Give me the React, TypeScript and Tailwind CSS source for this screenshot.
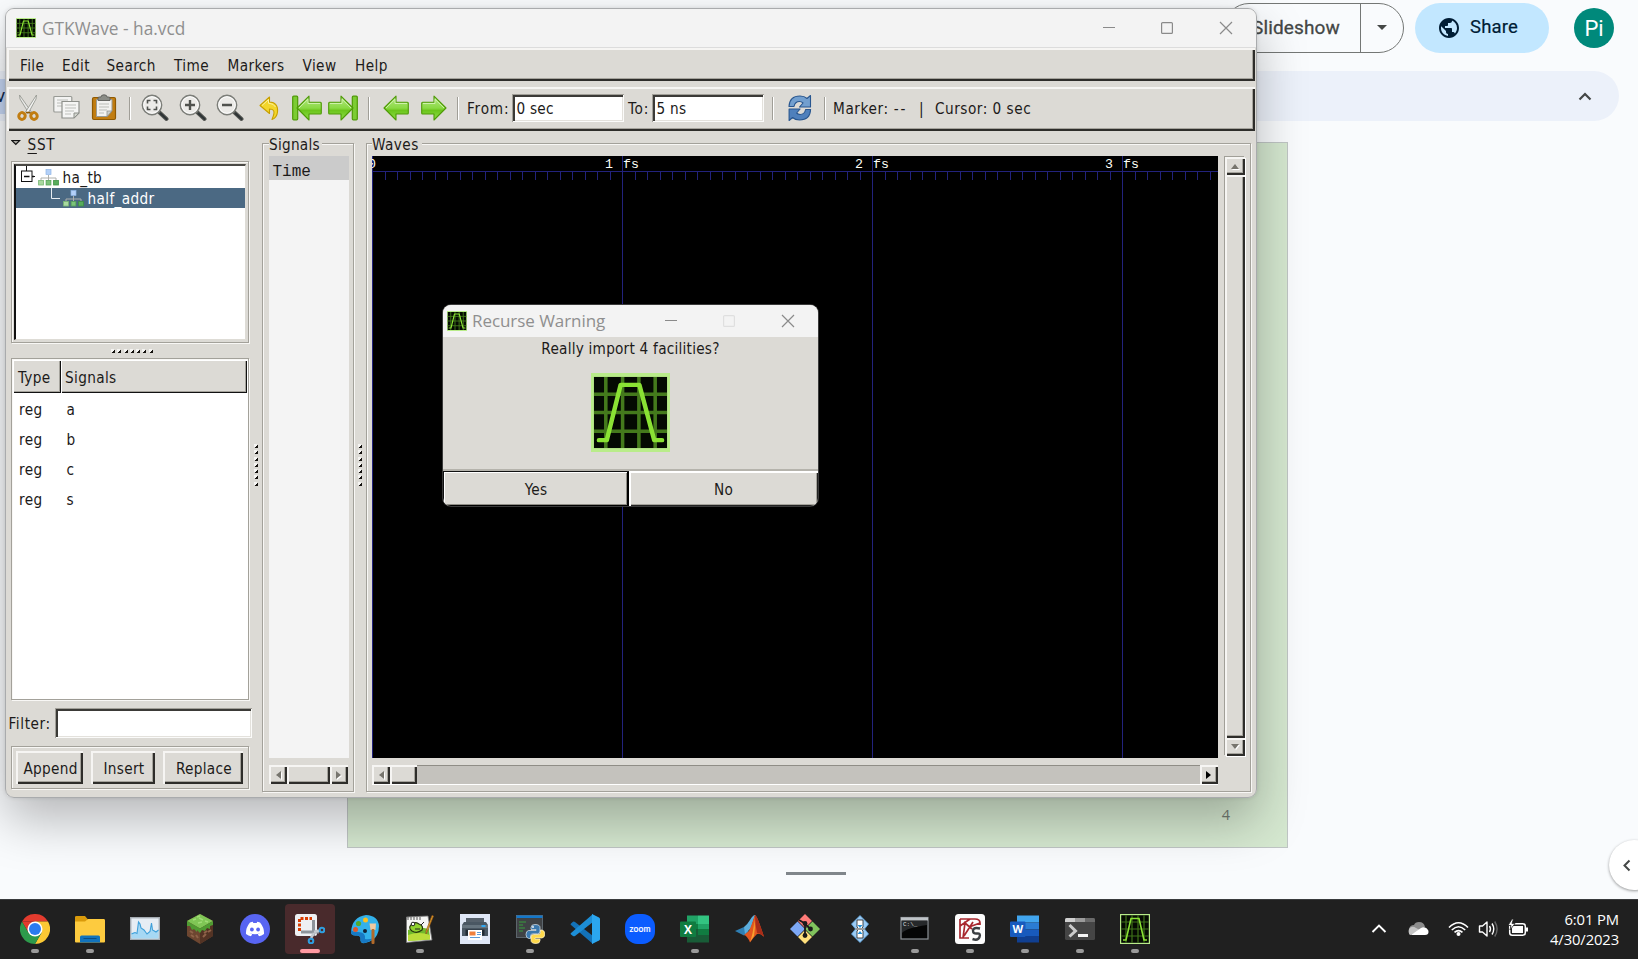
import React from "react";

const RAISED = "bg-[#dcdad5] shadow-[inset_2px_2px_#f6f5f3,inset_-2px_-2px_#2e2d2a,inset_-3px_-3px_#a5a39c]";
const SUNKEN = "bg-white shadow-[inset_1px_1px_#a19f98,inset_-1px_-1px_#fbfbfa,inset_3px_3px_#3b3a37,inset_-2px_-2px_#e3e1dc]";
const ETCHED = "border border-[#a3a19a] shadow-[1px_1px_#f8f7f5,inset_1px_1px_#f8f7f5]";
const GTK = "font-['DejaVu_Sans_Condensed','DejaVu_Sans',sans-serif] text-[15.2px] text-[#1c1a1a]";

function Logo({ size }: { size: number }) {
  return (
    <svg width={size} height={size} viewBox="0 0 80 80" className="block shrink-0">
      <rect width="80" height="80" fill="#b9ec8a" />
      <rect x="3" y="4" width="74" height="72" fill="#040a02" />
      <path d="M15 4V76M32 4V76M48.500 4V76M65 4V76M3 21.500H77M3 40H77M3 59H77" stroke="#447a1c" strokeWidth="3.600" fill="none" />
      <path d="M8 68H16L30 12H49L64 68H72" stroke="#8ae234" strokeWidth="4.500" fill="none" strokeLinecap="round" strokeLinejoin="round" />
    </svg>
  );
}

function Separator({ className = "" }: { className?: string }) {
  return <div className={"h-[23px] w-[2px] shrink-0 border-l border-r border-l-[#a09e97] border-r-white " + className} />;
}

function ZoomIcon({ kind }: { kind: "fit" | "in" | "out" }) {
  return (
    <svg width="28" height="28" viewBox="0 0 28 28" className="block shrink-0">
      <path d="M18 18L25.500 25" stroke="#555753" strokeWidth="4" strokeLinecap="round" />
      <path d="M19.500 19.500L25.500 25" stroke="#2e3436" strokeWidth="2" strokeLinecap="round" />
      <circle cx="11" cy="11" r="9.600" fill="#ecebe8" stroke="#7c7e79" strokeWidth="1.600" />
      <circle cx="11" cy="11" r="8.300" fill="none" stroke="#fff" strokeWidth="1" />
      {kind === "fit" && <path d="M6.500 9.500V6.500H9.500M12.500 6.500H15.500V9.500M15.500 12.500V15.500H12.500M9.500 15.500H6.500V12.500" stroke="#50524e" strokeWidth="1.600" fill="none" />}
      {kind === "in" && <path d="M6 11H16M11 6V16" stroke="#50524e" strokeWidth="2.400" />}
      {kind === "out" && <path d="M6 11H16" stroke="#50524e" strokeWidth="2.400" />}
    </svg>
  );
}

function ArrowIcon({ dir, bar = false }: { dir: "left" | "right"; bar?: boolean }) {
  return (
    <svg width={bar ? 30 : 26} height="26" viewBox={bar ? "0 0 30 26" : "4 0 26 26"} className={dir === "right" ? "block shrink-0 -scale-x-100" : "block shrink-0"}>
      <defs>
        <linearGradient id="arrowGreen" x1="0" y1="0" x2="0" y2="1">
          <stop offset="0" stopColor="#b5e886" />
          <stop offset=".5" stopColor="#8ad943" />
          <stop offset=".6" stopColor="#6cc51c" />
          <stop offset="1" stopColor="#8fe04a" />
        </linearGradient>
      </defs>
      {bar && <rect x=".700" y="1.200" width="5" height="23.600" rx="1" fill="#7ccc33" stroke="#4e9a06" strokeWidth="1.200" />}
      <path d="M5 13L17 1.200V7.300H28.500Q29.300 7.300 29.300 8.300V18Q29.300 19 28.500 19H17V25Z" fill="url(#arrowGreen)" stroke="#4e9a06" strokeWidth="1.100" strokeLinejoin="round" />
      <path d="M7 13L16 4.200V8.500H28" fill="none" stroke="#d2f3b2" strokeWidth=".900" />
    </svg>
  );
}

function TreeIcon() {
  return (
    <svg width="21" height="18" viewBox="0 0 21 18" className="block shrink-0">
      <path d="M10.500 6V9M3 11V9H18V11M10.500 9V11" stroke="#aeb0ac" fill="none" />
      <rect x="8" y=".500" width="5" height="5" fill="#b3d0f7" stroke="#8fb6e6" strokeWidth=".700" />
      <rect x=".600" y="11.500" width="4.800" height="4.500" fill="#a9d8a0" stroke="#78b873" strokeWidth=".800" />
      <rect x="8.100" y="11.500" width="4.800" height="4.500" fill="#7cc37a" stroke="#55a257" strokeWidth=".800" />
      <rect x="15.600" y="11.500" width="4.800" height="4.500" fill="#58ac5c" stroke="#3d9144" strokeWidth=".800" />
    </svg>
  );
}

function Dots({ vertical = false }: { vertical?: boolean }) {
  return (
    <div className={vertical ? "flex flex-col gap-[2.300px]" : "flex gap-[2.300px]"}>
      {Array.from({ length: 7 }, (_, i) => (
        <svg key={i} width="4" height="4" viewBox="0 0 4 4" className="block">
          <rect width="3" height="3" fill="#f5f4f2" />
          <path d="M4 1V4H1V3H2V2H3V1Z" fill="#14110e" />
        </svg>
      ))}
    </div>
  );
}

function ScrollArrow({ dir, dark = false, className }: { dir: "up" | "down" | "left" | "right"; dark?: boolean; className: string }) {
  const d = { up: "M1 8L5 3L9 8Z", down: "M1 2L5 7L9 2Z", left: "M8 1L3 5L8 9Z", right: "M2 1L7 5L2 9Z" }[dir];
  return (
    <div className={"flex shrink-0 items-center justify-center " + RAISED + " " + className}>
      <svg width="10" height="10" viewBox="0 0 10 10">
        {!dark && <path d={d} fill="#fff" transform="translate(1 1)" />}
        <path d={d} fill={dark ? "#000" : "#77756e"} />
      </svg>
    </div>
  );
}

function MenuBar() {
  const items: [string, string][] = [["File", "w-[42px]"], ["Edit", "w-[44.500px]"], ["Search", "w-[67.500px]"], ["Time", "w-[53.500px]"], ["Markers", "w-[75px]"], ["View", "w-[52.500px]"], ["Help", "w-[40px]"]];
  return (
    <div className={"mx-[1px] flex h-[33px] shrink-0 items-center pl-[13px] pt-[2px] tracking-[.4px] " + RAISED}>
      {items.map(([t, w]) => <div key={t} className={"shrink-0 leading-[20px] " + w}>{t}</div>)}
    </div>
  );
}

function ToolBar() {
  return (
    <div className={"mx-[1px] mt-[6px] flex h-[44px] shrink-0 items-center pb-[2px] " + RAISED}>
      <svg width="26" height="28" viewBox="0 0 26 28" className="ml-[9px] block shrink-0">
        <path d="M3.500 1L15.500 18L13 19.500L4 5Z" fill="#e8e8e6" stroke="#969892" strokeWidth=".900" />
        <path d="M20.500 1L9.500 18L12 19.500L20 5Z" fill="#f3f3f2" stroke="#969892" strokeWidth=".900" />
        <ellipse cx="6" cy="22" rx="3.200" ry="3.400" fill="none" stroke="#c17d11" strokeWidth="3" transform="rotate(20 6 22)" />
        <ellipse cx="18" cy="22" rx="3.200" ry="3.400" fill="none" stroke="#c17d11" strokeWidth="3" transform="rotate(-20 18 22)" />
        <path d="M10 18.500H14.500" stroke="#8f5902" strokeWidth="1.500" />
      </svg>
      <svg width="28" height="26" viewBox="0 0 28 26" className="ml-[11px] block shrink-0">
        <rect x=".800" y="1.500" width="18" height="15.500" rx="1" fill="#f3f3f2" stroke="#989a95" strokeWidth="1.200" />
        <path d="M4 5H15M4 8H13M4 11H10" stroke="#babcb8" />
        <path d="M9 6.500H26V18L21 23H9Z" fill="#f5f5f4" stroke="#8e908b" strokeWidth="1.200" />
        <path d="M12 10H23M12 13H23M12 16H21M12 19H18" stroke="#bdbfbb" />
        <path d="M26 18H21V23Z" fill="#d3d7cf" stroke="#8e908b" />
      </svg>
      <svg width="26" height="28" viewBox="0 0 26 28" className="ml-[10px] block shrink-0">
        <rect x="1.500" y="3.500" width="23" height="22" rx="1.500" fill="#c17d11" stroke="#8f5902" strokeWidth="1.200" />
        <path d="M5.500 5.500H21V17L16 22.500H5.500Z" fill="#f2f2f0" stroke="#999b96" />
        <path d="M8 10H18M8 13H18M8 16H16M8 19H13" stroke="#bbbdb8" />
        <path d="M21 17H16V22.500Z" fill="#cfd1cc" stroke="#8b8d87" strokeWidth=".700" />
        <path d="M7 6.500V4Q7 3 8.500 3H10Q10 .800 13 .800T16 3H17.500Q19 3 19 4V6.500Z" fill="#8a8c86" stroke="#5c5e5a" strokeWidth=".900" />
      </svg>
      <Separator className="ml-[12px]" />
      <div className="ml-[10px] flex gap-[9.500px]">
        <ZoomIcon kind="fit" /><ZoomIcon kind="in" /><ZoomIcon kind="out" />
      </div>
      <svg width="21" height="26" viewBox="0 0 21 26" className="ml-[15px] block shrink-0">
        <path d="M1 10.500L10.500 2V7Q19.500 7.500 18.500 17Q18 22.500 13 24.500Q16 17.500 14.500 15.500Q13.500 14 10.500 14V18.500Z" fill="#f3d62c" stroke="#c8a000" strokeWidth="1.100" strokeLinejoin="round" />
        <path d="M3 10.500L9.500 4.500V8.200Q15 8.500 16.500 12" fill="none" stroke="#fdf3a0" />
      </svg>
      <div className="ml-[12px] flex gap-[6px]"><ArrowIcon dir="left" bar /><ArrowIcon dir="right" bar /></div>
      <Separator className="ml-[10px]" />
      <div className="ml-[13px] flex gap-[12px]"><ArrowIcon dir="left" /><ArrowIcon dir="right" /></div>
      <Separator className="ml-[10px]" />
      <div className="ml-[8px] w-[45px] shrink-0 whitespace-nowrap pt-[3px] tracking-[.8px]">From:</div>
      <div className={"h-[28px] w-[112px] shrink-0 pl-[4.500px] leading-[30px] tracking-[.23px] " + SUNKEN}>0 sec</div>
      <div className="ml-[4px] w-[24px] shrink-0 whitespace-nowrap pt-[3px] tracking-[.8px]">To:</div>
      <div className={"h-[28px] w-[112px] shrink-0 pl-[4.500px] leading-[30px] tracking-[.23px] " + SUNKEN}>5 ns</div>
      <Separator className="ml-[8px]" />
      <svg width="26" height="28" viewBox="0 0 26 28" className="ml-[13px] block shrink-0">
        <g fill="#729fcf" stroke="#28568f" strokeWidth="1.100" strokeLinejoin="round">
          <path d="M2 12.500Q2.500 2 13 2Q17.500 2 20 4.500L23.500 1.500V13H12.500L16 9Q14.500 7.500 12.500 7.500Q8 7.500 7 12.500Z" />
          <path d="M2 12.500Q2.500 2 13 2Q17.500 2 20 4.500L23.500 1.500V13H12.500L16 9Q14.500 7.500 12.500 7.500Q8 7.500 7 12.500Z" transform="rotate(180 12.800 14)" fill="#4f80bc" />
        </g>
      </svg>
      <Separator className="ml-[11px]" />
      <div className="ml-[7px] w-[86px] shrink-0 whitespace-nowrap pt-[3px] tracking-[.6px]">Marker: <span className="tracking-[1.8px]">--</span></div>
      <div className="w-[16px] shrink-0 pt-[3px]">|</div>
      <div className="whitespace-nowrap pt-[3px] tracking-[.5px]">Cursor: 0 sec</div>
    </div>
  );
}

function SidePanel() {
  return (
    <div className="flex w-[256px] shrink-0 flex-col">
      <div className="flex h-[30px] shrink-0 pl-[5px] pt-[4px]">
        <svg width="10" height="8" viewBox="0 0 10 8" className="mt-[4px]"><path d="M.800 1.500H8.700L4.800 5.500Z" fill="#a9a7a0" stroke="#111" strokeWidth="1.100" /></svg>
        <div className="ml-[6.500px] leading-[20px] tracking-[.7px]"><span className="underline underline-offset-[3px]">S</span>ST</div>
      </div>
      <div className={"ml-[5px] h-[182px] w-[238px] shrink-0 p-[2px] " + ETCHED}>
        <div className="h-full border-l-2 border-t-2 border-r border-b border-l-[#111] border-r-[#dedcd6] border-t-[#4a4945] border-b-[#dedcd6] bg-white">
          <div className="flex h-[22px] items-center">
            <svg width="15" height="22" viewBox="0 0 15 22" className="ml-[4px] block">
              <path d="M6.500 0V5M12 10.500H15" stroke="#111" />
              <rect x="1.500" y="5" width="10.500" height="10.500" fill="#fff" stroke="#111" />
              <path d="M4 10.500H9.500M12 10.500H14" stroke="#111" strokeWidth="1.400" />
            </svg>
            <div className="ml-[3px] pt-[2px]"><TreeIcon /></div>
            <div className="ml-[3.500px] pt-[2px] leading-[18px] tracking-[.35px]">ha_tb</div>
          </div>
          <div className="flex h-[20px] items-center bg-[#4b6983] text-white">
            <svg width="10" height="20" viewBox="0 0 10 20" className="ml-[35px] block"><path d="M.500 0V10.500H9" stroke="#e8edf2" fill="none" /></svg>
            <div className="ml-[2px] pt-[1px]"><TreeIcon /></div>
            <div className="ml-[3.500px] pt-[1px] leading-[18px] tracking-[.35px]">half_addr</div>
          </div>
        </div>
      </div>
      <div className="flex h-[15px] shrink-0 items-center pl-[105px] pt-[1px]"><Dots /></div>
      <div className={"ml-[5px] flex h-[342px] w-[238px] shrink-0 flex-col bg-white p-[1px] " + ETCHED}>
        <div className="flex h-[33px] shrink-0 leading-[37px] tracking-[.35px]">
          <div className="w-[48px] bg-[#dcdad5] pl-[5px] shadow-[inset_1px_1px_#fff,inset_-1px_-1px_#111,inset_-2px_-2px_#a5a39c]">Type</div>
          <div className="flex-1 bg-[#dcdad5] pl-[4px] shadow-[inset_1px_1px_#fff,inset_-1px_-1px_#111,inset_-2px_-2px_#a5a39c]">Signals</div>
        </div>
        <div className="pt-[2px]">
          {["a", "b", "c", "s"].map((n) => (
            <div key={n} className="flex h-[30px] items-center pl-[6px] tracking-[.35px]">
              <div className="w-[47.500px]">reg</div>
              <div>{n}</div>
            </div>
          ))}
        </div>
      </div>
      <div className="mt-[8px] flex h-[30px] shrink-0 items-center pl-[2.500px]">
        <div className="w-[46.500px] whitespace-nowrap pt-[3px] tracking-[.6px]">Filter:</div>
        <div className={"h-[30px] w-[197px] " + SUNKEN} />
      </div>
      <div className={"ml-[5px] mt-[8px] flex h-[43px] w-[238px] shrink-0 items-center gap-[8px] pl-[4px] tracking-[.3px] " + ETCHED}>
        <div className={"flex h-[33px] w-[67px] items-center justify-center pl-[2px] pt-[4px] " + RAISED}>Append</div>
        <div className={"flex h-[33px] w-[64px] items-center justify-center pl-[2px] pt-[4px] " + RAISED}>Insert</div>
        <div className={"flex h-[33px] w-[80px] items-center justify-center pl-[2px] pt-[4px] " + RAISED}>Replace</div>
      </div>
    </div>
  );
}

function SignalsPanel() {
  return (
    <div className={"mt-[12px] flex h-[649px] w-[92px] shrink-0 flex-col pl-[6px] " + ETCHED}>
      <div className="mt-[-9px] h-[21px] w-[53px] shrink-0 bg-[#dcdad5] leading-[20px] tracking-[.25px]">Signals</div>
      <div className="flex h-[602px] w-[80px] shrink-0 flex-col bg-[#f4f4f4]">
        <div className="h-[24px] bg-[#cbcbcb] pl-[3.500px] font-['Liberation_Mono',monospace] text-[16px] leading-[33px]">Time</div>
      </div>
      <div className="mt-[7px] flex h-[19px] w-[79px] shrink-0">
        <ScrollArrow dir="left" className="w-[18px]" />
        <div className={"flex-1 " + RAISED} />
        <ScrollArrow dir="right" className="w-[18px]" />
      </div>
    </div>
  );
}

function WavesPanel() {
  const ticks = Array.from({ length: 68 }, (_, i) => i);
  return (
    <div className={"mt-[12px] flex h-[649px] w-[885px] shrink-0 flex-col pl-[5px] " + ETCHED}>
      <div className="mt-[-9px] h-[21px] w-[50px] shrink-0 bg-[#dcdad5] leading-[20px] tracking-[.45px]">Waves</div>
      <div className="flex shrink-0">
        <svg width="846" height="602" viewBox="0 0 846 602" className="block shrink-0" shapeRendering="crispEdges">
          <rect width="846" height="602" fill="#000" />
          {ticks.map((i) => <rect key={i} x={Math.round(i * 12.5)} y="16" width="1" height="8" fill="#22227c" />)}
          <rect x="0" y="15" width="846" height="1" fill="#22227c" />
          {[0, 250, 500, 750].map((x) => <rect key={x} x={x} y="0" width="1" height="602" fill="#22227c" />)}
          <g fill="#fffff8" fontFamily="Liberation Mono, monospace" fontSize="13.300">
            <text x="-4" y="12">0</text>
            {[1, 2, 3].map((n) => (
              <React.Fragment key={n}>
                <text x={n * 250 - 17} y="12">{n}</text>
                <text x={n * 250 + 1} y="12">fs</text>
              </React.Fragment>
            ))}
          </g>
        </svg>
        <div className="ml-[7px] mt-[1px] flex h-[599px] w-[20px] flex-col shadow-[-1px_-1px_#a19f98,1px_1px_#fff]">
          <ScrollArrow dir="up" className="h-[18px]" />
          <div className={"flex-1 " + RAISED} />
          <ScrollArrow dir="down" className="h-[18px]" />
        </div>
      </div>
      <div className="mt-[7px] flex h-[19px] w-[846px] shrink-0 bg-[#c4c2bd] shadow-[inset_0_1px_#8f8d86,0_1px_#fff]">
        <ScrollArrow dir="left" className="w-[18px]" />
        <div className={"w-[27px] " + RAISED} />
        <div className="flex-1" />
        <ScrollArrow dir="right" dark className="w-[18px]" />
      </div>
    </div>
  );
}

function MainWindow() {
  return (
    <div className={"absolute left-[5px] top-[8px] flex h-[790px] w-[1252px] flex-col overflow-hidden rounded-[9px] border border-[#a9abad] bg-[#dcdad5] " + GTK}>
      <div className="flex h-[39px] shrink-0 items-center border-b border-[#dcdcdc] bg-[#f3f3f3] pl-[10px]">
        <Logo size={20} />
        <div className="ml-[6px] whitespace-nowrap pt-[1px] font-['Open_Sans',sans-serif] text-[17.300px] text-[#8f8f8f]">GTKWave - ha.vcd</div>
        <svg width="130" height="14" viewBox="0 0 130 14" className="ml-auto mr-[23px] block" fill="none" stroke="#8a8a8a" strokeWidth="1.200">
          <path d="M0 6.500H12" />
          <rect x="58.600" y="1.600" width="10.800" height="10.800" rx="1" />
          <path d="M117 1L129 13M129 1L117 13" />
        </svg>
      </div>
      <MenuBar />
      <ToolBar />
      <div className="flex flex-1">
        <SidePanel />
        <SignalsPanel />
        <div className="w-[12px] shrink-0" />
        <WavesPanel />
      </div>
      <div className="absolute left-[248px] top-[435px]"><Dots vertical /></div>
      <div className="absolute left-[352px] top-[435px]"><Dots vertical /></div>
    </div>
  );
}

function Dialog() {
  return (
    <div className={"absolute left-[443px] top-[305px] flex h-[201px] w-[375px] flex-col overflow-hidden rounded-[8px] bg-[#dcdad5] tracking-[.23px] shadow-[0_0_0_1px_#3a3a3a] " + GTK}>
      <div className="flex h-[32px] shrink-0 items-center bg-[#f3f3f3] pl-[4px]">
        <Logo size={20} />
        <div className="ml-[5px] whitespace-nowrap font-['Open_Sans',sans-serif] text-[17px] tracking-[-0.060px] text-[#8f8f8f]">Recurse Warning</div>
        <svg width="130" height="14" viewBox="0 0 130 14" className="ml-auto mr-[23px] block" fill="none" stroke="#8a8a8a" strokeWidth="1.200">
          <path d="M0 6.500H12" />
          <rect x="58.600" y="1.600" width="10.800" height="10.800" rx="1" stroke="#dfdfdf" />
          <path d="M117 1L129 13M129 1L117 13" />
        </svg>
      </div>
      <div className="h-[36px] pt-[2px] text-center leading-[20px]">Really import 4 facilities?</div>
      <div className="flex h-[96px] shrink-0 justify-center"><Logo size={79} /></div>
      <div className="h-[2px] shrink-0 bg-[#b5b3ac]" />
      <div className="flex flex-1">
        <div className="flex w-[186px] items-center justify-center bg-[#dcdad5] pt-[4px] shadow-[inset_1px_1px_#111,inset_-2px_-1px_#000,inset_2px_2px_#fff,inset_-3px_-2px_#8f8d86]">Yes</div>
        <div className="flex flex-1 items-center justify-center bg-[#dcdad5] pt-[4px] shadow-[inset_2px_2px_#fff,inset_-1px_-1px_#222,inset_-2px_-2px_#a5a39c]">No</div>
      </div>
    </div>
  );
}

function Browser() {
  return (
    <div className="flex h-[899px] flex-col overflow-hidden bg-[#f9fbfd] font-['Open_Sans',sans-serif]">
      <div className="flex h-[71px] shrink-0 justify-end pr-[24px] pt-[3px]">
        <div className="flex h-[50px] w-[180px] rounded-full border border-[#747775] font-['Roboto',sans-serif] text-[19px] text-[#444746]">
          <div className="flex w-[136px] items-center justify-end border-r border-[#747775] pr-[20px] tracking-[.15px] [-webkit-text-stroke:0.3px_#444746]">Slideshow</div>
          <svg width="10" height="5" viewBox="0 0 10 5" className="ml-[16px] mt-[21px]"><path d="M0 0H10L5 5Z" fill="#444746" /></svg>
        </div>
        <div className="ml-[11px] flex h-[50px] w-[134px] items-center rounded-full bg-[#c2e7ff] pl-[22px]">
          <svg width="24" height="24" viewBox="0 0 24 24" fill="#001d35"><path d="M12 2C6.480 2 2 6.480 2 12s4.480 10 10 10 10-4.480 10-10S17.520 2 12 2zM4 12c0-.610.080-1.210.210-1.780L8.990 15v1c0 1.100.900 2 2 2v1.930C7.060 19.430 4 16.070 4 12zm13.890 5.400c-.260-.810-1-1.400-1.900-1.400h-1v-3c0-.550-.450-1-1-1h-6v-2h2c.550 0 1-.450 1-1V7h2c1.100 0 2-.900 2-2v-.410C17.920 5.770 20 8.650 20 12c0 2.080-.810 3.980-2.110 5.400z" /></svg>
          <div className="ml-[9px] font-['Roboto',sans-serif] text-[18.500px] tracking-[.15px] text-[#001d35] [-webkit-text-stroke:0.2px_#001d35]">Share</div>
        </div>
        <div className="ml-[25px] mt-[5px] flex h-[40px] w-[40px] items-center justify-center rounded-full bg-[#00897b] pt-[1px] font-['Roboto',sans-serif] text-[22px] text-white">Pi</div>
      </div>
      <div className="mr-[19px] flex h-[50px] shrink-0 items-center rounded-r-full bg-[#ecf1fa]">
        <div className="flex h-[35px] w-[20px] items-center overflow-hidden bg-[#c5d5f2] text-[19px] text-[#12284b]"><span className="ml-[-4px] font-['Roboto',sans-serif]">v</span></div>
        <svg width="14" height="9" viewBox="0 0 14 9" className="ml-auto mr-[27px] mt-[1px]"><path d="M1.500 7.500L7 2L12.500 7.500" stroke="#444746" strokeWidth="2.200" fill="none" /></svg>
      </div>
      <div className="ml-[347px] mt-[21px] flex h-[706px] w-[941px] shrink-0 items-end justify-end border border-[#bfc5c4] bg-[#d5e8d0] pb-[21px] pr-[57px] text-[14.500px] text-[#727b72]">4</div>
      <div className="mt-[24px] ml-[786px] h-[3px] w-[60px] shrink-0 bg-[#80868b]" />
    </div>
  );
}

const ICONS: { key: string; run?: boolean; active?: boolean; art: React.ReactNode }[] = [
  { key: "chrome", run: true, art: <><path d="M15 7.500L2 7.500A15 15 0 0 1 28 7.500Z" fill="#e33b2e" /><path d="M2 7.500L8.500 18.750L15 15V7.500Z" fill="#e33b2e" /><path d="M15 7.500H28A15 15 0 0 1 15 30L21.500 18.750Z" fill="#fcc934" /><path d="M2 7.500L8.500 18.750H21.500L15 30A15 15 0 0 1 2 7.500Z" fill="#2d9a4b" /><circle cx="15" cy="15" r="7.500" fill="#fff" /><circle cx="15" cy="15" r="6" fill="#2a7bf0" /></> },
  { key: "folder", run: true, art: <><path d="M0 3Q0 2 1.500 2H10L13 5.500V10H0Z" fill="#d99a0b" /><path d="M0 7.500H10L13 5H29Q30 5 30 6.500V27.500Q30 28.500 29 28.500H1Q0 28.500 0 27.500Z" fill="#fdcb3f" /><path d="M5 28.500V23Q5 21.500 6.500 21.500H23.500Q25 21.500 25 23V28.500Z" fill="#1173bd" /><path d="M8.500 24.500H21.500" stroke="#0b4c85" /></> },
  { key: "monitor", art: <><rect x=".700" y="3.700" width="28.600" height="21.600" fill="#e6edf4" stroke="#a4abb2" strokeWidth="1.400" /><path d="M1.500 19L5 18L7 20L8.500 8L10 9L11 14L14 16L17 20L20 17.500L21.500 8.500L22.500 16L26 17L28.500 16V24.500H1.500Z" fill="#a6d8f4" /><path d="M1.500 20L5 18.500L7 19.500L8.500 8L10 10L11 14L14 16L17 20L20 17.500L21.500 9L22.500 16L26 18L28.500 16" fill="none" stroke="#3fa0da" strokeWidth="1.100" /></> },
  { key: "block", art: <><path d="M15 0L28 7V22L15 30L2 22V7Z" fill="#6d4630" /><path d="M15 14L28 7V22L15 30Z" fill="#533324" /><path d="M15 0L28 7L15 14.500L2 7Z" fill="#7fc655" /><path d="M2 7L15 14.500L28 7V11L25 12V15L22 14L20 17L17 16L15 19L12 16V18L9 15L7 16L5 12L2 12Z" fill="#4f9c32" /><path d="M8 6L11 5M14 4L18 6M13 9L17 8M20 7L23 8M12 3L15 2" stroke="#a0dc76" strokeWidth="1.500" /><path d="M5 17L8 19M6 21L9 23M11 21L13 24M18 23L21 20M23 18L26 16M19 19L22 17" stroke="#8e6248" strokeWidth="2" /></> },
  { key: "discord", art: <><circle cx="15" cy="15" r="15" fill="#5865f2" /><path d="M10 8.500Q12 7.800 12.800 7.800L13.300 9H16.700L17.200 7.800Q18 7.800 20 8.500Q24.500 14 24 20Q21.500 22 19 22.300L17.800 20.300Q20 19.600 20.500 19Q15 21.500 9.500 19Q10 19.600 12.200 20.300L11 22.300Q8.500 22 6 20Q5.500 14 10 8.500Z" fill="#fff" /><ellipse cx="11.900" cy="15.500" rx="1.900" ry="2.100" fill="#5865f2" /><ellipse cx="18.100" cy="15.500" rx="1.900" ry="2.100" fill="#5865f2" /></> },
  { key: "snip", active: true, art: <><rect x="0" y="0" width="22" height="22" rx="2.500" fill="#eef0f3" /><path d="M4.500 17V4.500H17" stroke="#d83b01" strokeWidth="3" strokeDasharray="3 1.500" fill="none" /><path d="M18.500 6V22M6 18H24" stroke="#8d949b" strokeWidth="3" /><path d="M16 24L19 19M24 16.500L19 18" stroke="#c5cacf" strokeWidth="2.500" /><circle cx="27" cy="16" r="2.300" fill="none" stroke="#2f9fe0" strokeWidth="2" /><circle cx="16" cy="27" r="2.300" fill="none" stroke="#2f9fe0" strokeWidth="2" /></> },
  { key: "paint", art: <><path d="M16 1Q28 1.500 29 12Q29 17 27 21Q24 27 15 29Q10 30 10.500 25Q11 21.500 6.500 21.500Q1 22 1 18Q2 3 16 1Z" fill="#32b1ea" /><path d="M1 18Q1 22 6.500 21.500Q11 21.500 10.500 25Q10 29.500 15 29Q20 28 24 24Q18 26 15 25Q16 18 8 18Q3 18.500 1 16Z" fill="#1779c4" /><circle cx="8.500" cy="9.500" r="2.600" fill="#54a92c" /><circle cx="15.500" cy="6" r="2.500" fill="#fbc01e" /><circle cx="5.500" cy="15.500" r="2.500" fill="#e0552a" /><circle cx="15" cy="17" r="2" fill="#123" /><path d="M19.500 9.500H26L25.500 16H20.500Z" fill="#f0c9a1" /><rect x="21.500" y="15" width="3" height="15" rx="1" fill="#b26a2a" /></> },
  { key: "notes", run: true, art: <><path d="M1.500 3L23 2L27 26L1.500 28.500Z" fill="#f5f5f3" stroke="#777" strokeWidth=".800" /><path d="M3 16Q12 12 24 15L25 25.500L3 27Z" fill="#72ba2b" /><path d="M3 21Q14 17 25 21V25.500L3 27Z" fill="#bcdd3a" /><path d="M6 11Q9 7 14 10Q19 12 17 16Q12 20 7 17Q3 14 6 11Z" fill="#8fd12f" stroke="#27350d" strokeWidth="1.200" /><circle cx="8" cy="10" r="1.800" fill="#fff" stroke="#222" /><path d="M10 15H15M16 11L19 8" stroke="#222" /><path d="M28.500 2L22 18L21 20L21 17L27 1.500Z" fill="#e7a529" stroke="#90541a" strokeWidth=".700" /><path d="M3 3V6M6 3V6M9 3V6M12 3V6M15 3V6" stroke="#555" /></> },
  { key: "printer", art: <><rect width="30" height="30" fill="#dfe7f6" /><rect x="6" y="4" width="18" height="5" fill="#56616c" /><path d="M2 11L4 8H26L28 11V22H2Z" fill="#4a5763" /><path d="M2 11H28V14H2Z" fill="#66747f" /><rect x="21.500" y="11" width="4" height="2" fill="#31a8f4" /><rect x="5.500" y="15.500" width="19" height="6" fill="#212b34" /><path d="M8 16H22V26H8Z" fill="#fff" /><rect x="9.500" y="17.500" width="6" height="4" fill="#f0803c" /><path d="M17 18.500H21M17 20.500H21M10 23.500H20" stroke="#5e9bd5" /></> },
  { key: "python", run: true, art: <><rect x="1.500" y="1.500" width="26" height="22" fill="#3f4245" stroke="#68737c" strokeWidth=".800" /><rect x="1.500" y="1.500" width="26" height="2.500" fill="#1377c9" /><path d="M4 8H11M4 11H8M4 14H10M4 17H8" stroke="#399d3d" /><path d="M20 10.500Q16 10.500 16 13.500V15.500H21V16.500H13.500Q11 17 11 20.500T13.800 24.500H15.500V22Q15.500 19.800 18 19.800H22.500Q25 19.800 25 17V13.500Q25 10.500 20 10.500Z" fill="#3b78ad" stroke="#e3e8ec" strokeWidth=".700" /><path d="M21 29.500Q25 29.500 25 26.500V25H20V24H27Q29.800 23.500 29.800 20T27 16H25.500V18.500Q25.500 20.500 23 20.500H18.500Q16 20.500 16 23V26.500Q16 29.500 21 29.500Z" fill="#ffd94b" stroke="#fff7d7" strokeWidth=".700" /><circle cx="18" cy="13" r=".900" fill="#fff" /></> },
  { key: "code", art: <><path d="M1 9.500L3 7.800Q4 7.300 5 8L23 22V30L1 11Q0 10 1 9.500Z" fill="#1372b8" /><path d="M1 19L23 0V8L5 22Q4 22.700 3 22L1 20.500Q0 19.700 1 19Z" fill="#1d8ed6" /><path d="M22 0L29 3.500Q30 4 30 5V25Q30 26 29 26.500L22 30Z" fill="#2ba6ef" /></> },
  { key: "zoom", art: <><rect width="30" height="30" rx="12.500" fill="#0b5cff" /><text x="15" y="17.500" textAnchor="middle" fontFamily="Lato, sans-serif" fontSize="8.500" fill="#fff" stroke="#fff" strokeWidth=".200" textLength="21">zoom</text></> },
  { key: "excel", run: true, art: <><path d="M7 1.500H18V10H7Z" fill="#21a366" /><path d="M18 1.500H29V10H18Z" fill="#33c481" /><path d="M7 10H18V19H7Z" fill="#107c41" /><path d="M18 10H29V15H18Z" fill="#21a366" /><path d="M7 15H29V28.500H7Z" fill="#185c37" /><path d="M18 15H29V21H18Z" fill="#107c41" /><rect x="0" y="7.500" width="16" height="15.500" rx="1" fill="#107c41" /><text x="8" y="19.500" textAnchor="middle" fontFamily="Open Sans, sans-serif" fontSize="12" fontWeight="700" fill="#fff">X</text></> },
  { key: "matlab", art: <><path d="M0 17L9 13L14 18L9 21.500Z" fill="#2f7fb4" /><path d="M9 13Q12 11 15 6Q18 1 20 1L16 14L10 20Z" fill="#5caedd" /><path d="M9 21L14 17Q17 10 20 1Q22 1 29 23Q25 18.500 22 20Q18 24 15 28.500Q12.500 22 9 21Z" fill="#e2561f" /><path d="M20 1Q22 1 29 23Q25 18.500 22 19Q20 10 20 1Z" fill="#a92c19" /><path d="M15 28Q18 20 19.500 6Q20.500 13 19 22Z" fill="#f7a12e" /></> },
  { key: "git", art: <><path d="M15 0L22 7L15 14L8 7Z" fill="#ff7b78" /><path d="M22.500 7.500L30 15L22.500 22.500L15 15Z" fill="#81c35d" /><path d="M15 16L22 23L15 30L8 23Z" fill="#ffe07c" /><path d="M7.500 7.500L15 15L7.500 22.500L0 15Z" fill="#7da8f5" /><path d="M9 6L15 9.500V22M15 10L20.500 15" stroke="#1a1a1a" strokeWidth="1.800" fill="none" /><circle cx="15" cy="9.500" r="2.400" fill="#1a1a1a" /><circle cx="20.500" cy="15" r="2.400" fill="#1a1a1a" /><circle cx="15" cy="21.500" r="2.400" fill="#1a1a1a" /></> },
  { key: "tower", art: <><path d="M15 1.500L23.500 10L19.500 15L23.500 20L15 28.500L6.500 20L10.500 15L6.500 10Z" fill="#9acbf5" stroke="#5da4e0" strokeWidth=".800" /><path d="M12 6H18V13L16 15L18 17V24H12V17L14 15L12 13Z" fill="#fff" stroke="#222" strokeWidth=".800" /><path d="M12.500 11H17.500L15 14ZM15 17L17.500 20H12.500Z" fill="#2590d8" /><path d="M10.500 15H19.500" stroke="#999" strokeWidth="2" /></> },
  { key: "cmd", run: true, art: <><rect x="1" y="3.500" width="27" height="21.500" fill="#050505" stroke="#8c9196" strokeWidth="1.200" /><rect x="1" y="3.500" width="27" height="3" fill="#bfc4c8" /><path d="M2 19Q6 14 27 11V7H2Z" fill="#26282a" /><text x="3" y="12" fontFamily="Liberation Mono, monospace" fontSize="6" fill="#ddd">C:\_</text></> },
  { key: "kicad", run: true, art: <><rect width="30" height="30" rx="3.500" fill="#fdfdfd" /><path d="M5 5H20Q25 5 25 9V11M5 5V24H14M5 12L15 5M8 24L10 9L17 15M14 13L25 9M9 22L18 8" stroke="#a8282f" strokeWidth="1.700" fill="none" /><path d="M25 14.500Q18 13 18 16.500T22 19.500T24.500 23T17.500 25" stroke="#3b3f42" strokeWidth="2.400" fill="none" /></> },
  { key: "word", run: true, art: <><path d="M7 1.500H29V8.500H7Z" fill="#41a5ee" /><path d="M7 8.500H29V15.500H7Z" fill="#2b7cd3" /><path d="M7 15.500H29V22H7Z" fill="#185abd" /><path d="M7 22H29V28.500H7Z" fill="#103f91" /><rect x="0" y="7.500" width="15.500" height="15.500" rx="1" fill="#185abd" /><text x="7.700" y="19.300" textAnchor="middle" fontFamily="Open Sans, sans-serif" fontSize="11" fontWeight="700" fill="#fff">W</text></> },
  { key: "terminal", run: true, art: <><rect x="0" y="4" width="30" height="22" rx="1.500" fill="#454545" /><path d="M0 8V5.500Q0 4 1.500 4H10V8Z" fill="#cfcfcf" /><rect x="10" y="4" width="10" height="4" fill="#9b9b9b" /><path d="M20 4H28.500Q30 4 30 5.500V8H20Z" fill="#6a6a6a" /><path d="M4.500 11L10.500 17L4.500 22.500" stroke="#ccc" strokeWidth="3" fill="none" /><rect x="13" y="20" width="10" height="3" fill="#f5f5f5" /></> },
  { key: "wave", run: true, art: <><rect width="30" height="30" fill="#b9ec8a" /><rect x="1.200" y="1.200" width="27.600" height="27.600" fill="#050a02" /><path d="M6 1.200V28.800M12 1.200V28.800M18 1.200V28.800M24 1.200V28.800M1.200 8H28.800M1.200 15H28.800M1.200 22H28.800" stroke="#3f7219" strokeWidth="1.200" /><path d="M3 26H6L11 4.500H19L24 26H27" fill="none" stroke="#8ae234" strokeWidth="1.600" /></> },
];

function Taskbar() {
  return (
    <div className="flex h-[60px] items-start border-t border-[#393b3d] bg-[#202020]">
      <div className="ml-[10px] flex gap-[5px] pt-[4px]">
        {ICONS.map((i) => (
          <div key={i.key} className={"flex h-[50px] w-[50px] flex-col items-center rounded-[4px] pt-[10px] " + (i.active ? "bg-[#492a2c]" : "")}>
            <svg width="30" height="30" viewBox="0 0 30 30" className="block shrink-0">{i.art}</svg>
            {i.run && <div className="mt-[5px] h-[4px] w-[8px] rounded-full bg-[#9a9a9a]" />}
            {i.active && <div className="mt-[5px] h-[4px] w-[20px] rounded-full bg-[#ff9aa2]" />}
          </div>
        ))}
      </div>
      <div className="ml-auto flex h-[57px] items-center pr-[19px]">
        <svg width="160" height="24" viewBox="0 0 160 24" className="block" fill="none" stroke="#fff">
          <path d="M1.500 15L8 8.500L14.500 15" strokeWidth="1.900" />
          <g stroke="none">
            <path d="M38 12Q39 8 43 8Q44 5 48 5Q53 5 54 10L46 14L40 18Q37 17 38 12Z" fill="#8c8c8c" />
            <path d="M39 18Q37 16 38 12Q41 8 45 11L51 14Z" fill="#c4c4c4" />
            <path d="M40 18L50 11Q52 10 54 10.500Q57.500 12 57.500 15T54 18Z" fill="#fff" />
            <circle cx="87.500" cy="17" r="2" fill="#fff" />
          </g>
          <path d="M78 10.500Q87.500 1 97 10.500M80.800 13Q87.500 6.500 94.200 13M83.500 15.300Q87.500 11.800 91.500 15.300" strokeWidth="1.600" />
          <path d="M108.500 9V15H111.500L116 19V5L111.500 9Z" strokeWidth="1.400" strokeLinejoin="round" />
          <path d="M118.500 9Q120.500 12 118.500 15M121 6.500Q124.500 12 121 17.500" strokeWidth="1.400" />
          <path d="M123.700 4.500Q128.500 12 123.700 19.500" stroke="#666" strokeWidth="1.400" />
          <rect x="138.700" y="6.700" width="15.600" height="11.600" rx="2.500" strokeWidth="1.500" />
          <rect x="141" y="9" width="11" height="7" fill="#fff" stroke="none" />
          <path d="M156 10.500V14.500" strokeWidth="2" />
          <path d="M141 2L137 8.500H140L139 13L144 6.500H141L142.500 2Z" fill="#fff" stroke="#202020" strokeWidth=".800" />
        </svg>
        <div className="ml-[18px] w-[70px] text-right font-['Open_Sans',sans-serif] text-[14.800px] leading-[20px] tracking-[-0.12px] text-white">
          <div>6:01 PM</div>
          <div>4/30/2023</div>
        </div>
      </div>
    </div>
  );
}

export default function App() {
  return (
    <div className="relative h-[959px] w-[1638px] overflow-hidden">
      <Browser />
      <div className="absolute left-[1609px] top-[840px] flex h-[50px] w-[50px] items-center rounded-full bg-white pl-[14px] shadow-[0_1px_3px_rgba(0,0,0,0.4)]">
        <svg width="8" height="13" viewBox="0 0 8 13"><path d="M6.500 1.500L1.500 6.500L6.500 11.500" stroke="#444746" strokeWidth="2" fill="none" /></svg>
      </div>
      <div className="absolute inset-x-0 top-0 h-[899px] overflow-hidden">
        <div className="absolute left-[5px] top-[8px] h-[790px] w-[1252px] rounded-[9px] shadow-[0_22px_50px_rgba(0,0,0,0.27),0_0_4px_rgba(0,0,0,0.12)]" />
      </div>
      <MainWindow />
      <Dialog />
      <Taskbar />
    </div>
  );
}
